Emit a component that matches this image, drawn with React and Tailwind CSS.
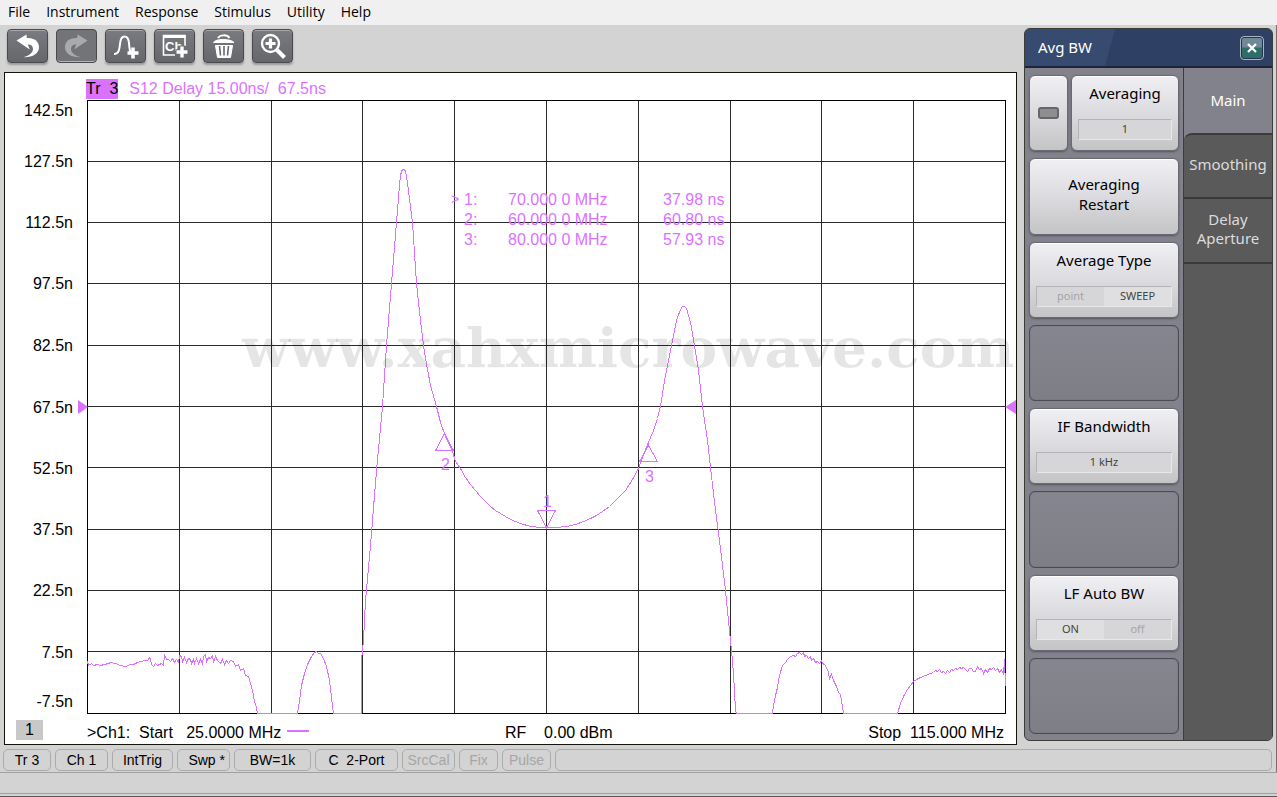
import clsx from "clsx";

const MENUS = ["File", "Instrument", "Response", "Stimulus", "Utility", "Help"];

const STATUS = [
    { label: "Tr 3", width: "w-12" },
    { label: "Ch 1", width: "w-[53px]" },
    { label: "IntTrig", width: "w-[61px]" },
    { label: "Swp *", width: "w-[53px]", align: "text-right pr-1" },
    { label: "BW=1k", width: "w-[77px]" },
    { label: "C  2-Port", width: "w-[83px]" },
    { label: "SrcCal", width: "w-[53px]", off: true },
    { label: "Fix", width: "w-[39px]", off: true },
    { label: "Pulse", width: "w-[49px]", off: true },
];

const COLS = [87, 179, 271, 362, 454, 546, 638, 730, 821, 913, 1005];
const ROWS = [100, 161, 222, 283, 345, 406, 467, 529, 590, 651, 713];

const AXIS = [
    ["142.5n", 116],
    ["127.5n", 167],
    ["112.5n", 228],
    ["97.5n", 289],
    ["82.5n", 351],
    ["67.5n", 413],
    ["52.5n", 474],
    ["37.5n", 535],
    ["22.5n", 596],
    ["7.5n", 658],
    ["-7.5n", 707],
];

const READOUT = [
    ["1:", "70.000 0 MHz", "37.98 ns", 205],
    ["2:", "60.000 0 MHz", "60.80 ns", 225],
    ["3:", "80.000 0 MHz", "57.93 ns", 245],
];

const TRACE = [
    // left stop band
    "87,661 88,665 91,663 93,665 97,664 100,665 104,664 108,663 110,662 115,663 120,665 125,666 130,664 133,664 137,662 140,661 145,660 147,660",
    "149,657 150,659 151,664 153,666 155,663 157,665 159,664 161,663 163,665 164,654 166,659 168,659 170,661 172,658 174,662 176,659 178,662 179,655",
    "181,656 182,661 184,657 186,662 188,658 190,659 191,663 193,659 194,663 196,658 198,663 200,659 202,663 203,656 205,654 206,661 208,657 210,658",
    "212,655 213,662 215,656 217,660 220,663 222,659 224,664 226,660 228,663 230,660 233,661 235,666 238,664 240,670 243,668 245,675 248,676 250,683",
    "252,690 254,701 256,707 257,713 297,713 299,700 301,685 304,673 307,664 311,656 314,652 316,651 318,653 320,653 323,658 326,666 329,680 331,697 333,713",
    // pass band
    "361,713 361,660 363,640 365,600 370,545 376,470 382,406 386,345 391,283 396,222 399,185 400,175 401,171 402,169 404,169 405,171 406,176 408,190 411,215 412,222 416,283",
    "420,320 423,345 425,358 430,385 436,406 440,422 445,436 452,451 455,461 460,468 465,477 470,484 475,490 480,496 485,501 490,506 495,510 500,513",
    "505,516 510,519 515,521 520,523 530,526 540,527 556,527 566,526 575,524 583,521 590,518 596,515 602,511 609,506 615,500 620,495 625,490 632,479",
    "638,468 645,449 653,430 657,418 660,406 664,380 667,365 671,345 676,320 680,309 682,306 684,306 686,308 690,322 694,345 698,370 702,406 707,440",
    "710,467 715,510 719,540 725,590 730,640 732,660 734,690 735,710 736,713",
    // right stop band
    "772,713 773,705 775,695 777,687 779,675 782,665 785,662 787,659 790,656 793,655 795,656 797,653 799,652 801,654 803,652 804,656 806,655 808,658",
    "810,656 811,660 813,658 815,662 817,661 819,663 821,660 822,663 824,664 826,667 828,672 829,678 831,674 833,680 836,686 838,692 840,694 842,706 843,713",
    "897,713 900,703 903,696 907,689 913,681 916,679 920,677 925,675 930,673 933,672 935,670 937,671 939,669 941,672 943,671 945,673 947,670 949,672",
    "951,669 953,670 955,668 957,669 959,667 961,668 963,667 965,669 967,671 969,668 971,668 973,671 975,671 977,666 979,669 981,668 983,673 985,669",
    "987,672 989,668 991,669 993,667 995,670 997,668 999,672 1001,669 1003,674 1004,659 1005,686",
].join(" ");

function UndoArrow() {
    return (
        <path d="M9.500 11.500 L19.500 5.500 L19.800 9 C27.500 8.500 32 12.500 32 18.300 C32 24.500 26 28.500 16.500 28.300 C22.500 26.500 26.200 23.500 26 19.800 C25.700 16.600 23.500 15.300 20.800 15.600 L22.800 20.500 Z" fill="currentColor" />
    );
}

const TOOLS = [
    { title: "Undo", icon: <UndoArrow /> },
    { title: "Redo", off: true, icon: <g transform="matrix(-1 0 0 1 41 0)"><UndoArrow /></g> },
    {
        title: "Add trace",
        icon: (
            <g fill="none" stroke="currentColor">
                <path d="M9 25 C14 25 14.500 20 15 15 C15.500 9 17 7.500 19.500 7.500 C22 7.500 23.500 9 24 14 C24.300 18 24.500 21 25.500 23" strokeWidth="2" />
                <path d="M28 18.500 V29.500 M22.500 24 H33.500" strokeWidth="3.600" />
            </g>
        ),
    },
    {
        title: "Add channel",
        icon: (
            <g fill="none" stroke="currentColor">
                <path d="M31 17 V6.500 H9.500 V26 H21" strokeWidth="1.600" />
                <path d="M9 7.500 H31.500" strokeWidth="3" />
                <text x="11" y="22" fontSize="13" fontWeight="700" fill="currentColor" stroke="none" className="font-['Liberation_Sans']">Ch</text>
                <path d="M28 16.500 V29.500 M21.500 23 H34.500" stroke="#6c6d72" strokeWidth="5.600" />
                <path d="M28 17.500 V28.500 M22.500 23 H33.500" strokeWidth="3.400" />
            </g>
        ),
    },
    {
        title: "Delete",
        icon: (
            <g fill="none" stroke="currentColor">
                <path d="M15 9 C16.500 6 24 5 26.500 9" strokeWidth="2" />
                <path d="M10.500 13.500 C12 9.500 28 9.500 31 13.500 Z" fill="currentColor" strokeWidth="1" />
                <path d="M12.500 16.500 H29.500 L27.500 28.500 H14.500 Z" fill="currentColor" strokeWidth="1" />
                <path d="M16.500 17 L17.500 26.500 M21 17 V26.500 M25.500 17 L24.500 26.500" stroke="#66676b" strokeWidth="1.600" />
            </g>
        ),
    },
    {
        title: "Zoom",
        icon: (
            <g fill="none" stroke="currentColor">
                <circle cx="18.500" cy="14.500" r="8.500" strokeWidth="2.400" />
                <path d="M18.500 9.500 V19.500 M13.500 14.500 H23.500" strokeWidth="3.200" />
                <path d="M25 21 L32.500 28.500" strokeWidth="4" />
            </g>
        ),
    },
];

function ToolButton({ tool }) {
    return (
        <button
            type="button"
            title={tool.title}
            aria-label={tool.title}
            disabled={tool.off}
            className={clsx(
                "h-[34px] w-[41px] overflow-hidden rounded-sm border",
                tool.off
                    ? "border-[#4a4a4d] bg-[#737478] text-[#a9aaad] shadow-[inset_0_-1px_0_#b5b5b8]"
                    : "border-[#4a4a4d] bg-linear-to-b from-[#7a7b80] to-[#66676b] text-white shadow-[inset_0_1px_0_#a8a8ac,0_2px_2px_#9a9a9a]"
            )}
        >
            <svg viewBox="1 1 39 32" className="block size-full">{tool.icon}</svg>
        </button>
    );
}

function Plot() {
    return (
        <svg viewBox="5 98 1011 620" className="relative block h-auto w-full overflow-visible text-base" role="img" aria-label="S12 group delay trace">
            <g stroke="#2b2b2b" shapeRendering="crispEdges">
                {COLS.map((x) => (
                    <line key={x} x1={x + 0.5} x2={x + 0.5} y1="100" y2="714" />
                ))}
                {ROWS.map((y) => (
                    <line key={y} y1={y + 0.5} y2={y + 0.5} x1="87" x2="1006" />
                ))}
                <rect x="87.5" y="100.5" width="918" height="613" fill="none" stroke="#000" />
            </g>

            <g textAnchor="end" fill="#000">
                {AXIS.map(([label, y]) => (
                    <text key={label} x="73" y={y}>{label}</text>
                ))}
            </g>

            {/* Reference level */}
            <path d="M78 400 L88 407 L78 414 Z M1016 400 L1005 407 L1016 414 Z" fill="#da72ff" />

            <polyline points={TRACE} transform="translate(0.5 0.5)" fill="none" stroke="#da72ff" shapeRendering="crispEdges" />

            {/* Markers */}
            <g fill="none" stroke="#da72ff" shapeRendering="crispEdges">
                <path d="M444.500 433.500 L435.500 450.500 H453.500 Z" />
                <path d="M648.500 445.500 L639.500 461.500 H657.500 Z" />
                <path d="M546.500 527.500 L537.500 510.500 H555.500 Z" />
            </g>
            <g fill="#da72ff">
                <text x="441" y="470">2</text>
                <text x="645" y="482">3</text>
                <text x="543" y="507">1</text>
                <text x="451" y="204" fontSize="14">&gt;</text>
                {READOUT.map(([n, freq, value, y]) => (
                    <g key={n}>
                        <text x="464" y={y}>{n}</text>
                        <text x="508" y={y}>{freq}</text>
                        <text x="663" y={y}>{value}</text>
                    </g>
                ))}
            </g>

            <text x="242" y="367" fontSize="55" fontWeight="700" fillOpacity="0.1" className="font-['DejaVu_Serif',serif]">
                www.xahxmicrowave.com
            </text>
        </svg>
    );
}

function Slot({ children }) {
    return <div className="flex gap-[3px] px-1 pt-[3px] pb-1">{children}</div>;
}

function SoftKey({ title, children, center }) {
    return (
        <button
            type="button"
            className={clsx(
                "flex min-w-0 flex-1 flex-col items-center rounded-md border border-[#6a6a72] bg-linear-to-b from-[#efeff4] via-[#dcdce0] to-[#c4c4c6] px-[6px] text-[15px] leading-5 text-black shadow-[inset_0_1px_0_#ffffff,0_1px_2px_#55555c]",
                center ? "justify-center pb-1" : "pt-[7px]"
            )}
        >
            <span>{title}</span>
            {children}
        </button>
    );
}

function Field({ children }) {
    return (
        <span className="mt-4 flex h-[21px] w-full border border-[#b4b4b8] border-r-[#e8e8ea] border-b-[#e8e8ea] bg-[#d6d6d8] text-[11px] leading-[18px] text-[#44443c]">
            {children}
        </span>
    );
}

function Choice({ label, on }) {
    return <span className={clsx("flex-1", on ? "bg-[#dfdfe1]" : "text-[#a4a4a8]")}>{label}</span>;
}

function EmptyKey() {
    return <div className="flex-1 rounded-md border border-[#4b4b53] bg-linear-to-b from-[#868690] to-[#7e7e87] shadow-[inset_0_0_1px_#4b4b53]" />;
}

function SidePanel() {
    return (
        <aside className="mt-[3px] mr-[3px] mb-1 flex w-[249px] shrink-0 flex-col overflow-hidden rounded-md border border-[#3c3d36] bg-[#5a5a5a] font-['Noto_Sans',sans-serif] text-[15px]">
            <header className="flex h-[39px] items-center justify-between border-b-2 border-[#1c2436] bg-linear-105 from-[#374a70] from-35% to-[#2f4065] to-35% pr-2 pl-[13px] text-white">
                <h2>Avg BW</h2>
                <button
                    type="button"
                    aria-label="Close"
                    className="flex size-6 items-center justify-center rounded-sm border border-[#a9b3c4] bg-linear-to-b from-[#6f8a96] from-45% to-[#2f6e68] to-50% shadow-[inset_0_0_0_1px_#24334f]"
                >
                    <svg viewBox="0 0 10 10" className="size-[10px]">
                        <path d="M1 1 L9 9 M9 1 L1 9" stroke="#fff" strokeWidth="2.200" />
                    </svg>
                </button>
            </header>
            <div className="flex flex-1">
                <div className="grid flex-1 grid-rows-8 border-r border-[#3c3d36] bg-[#82828c] pt-1 pb-[2px]">
                    <Slot>
                        <button
                            type="button"
                            aria-label="Averaging on or off"
                            className="flex w-[39px] items-center justify-center rounded-md border border-[#6a6a72] bg-linear-to-b from-[#efeff4] via-[#dcdce0] to-[#c4c4c6] shadow-[inset_0_1px_0_#ffffff,0_1px_2px_#55555c]"
                        >
                            <span className="h-3 w-[21px] rounded-[3px] border-2 border-[#66666a] bg-[#8e8e8e]" />
                        </button>
                        <SoftKey title="Averaging"><Field><span className="flex-1">1</span></Field></SoftKey>
                    </Slot>
                    <Slot><SoftKey title={<>Averaging<br />Restart</>} center /></Slot>
                    <Slot>
                        <SoftKey title="Average Type">
                            <Field><Choice label="point" /><Choice label="SWEEP" on /></Field>
                        </SoftKey>
                    </Slot>
                    <Slot><EmptyKey /></Slot>
                    <Slot>
                        <SoftKey title="IF Bandwidth"><Field><span className="flex-1">1 kHz</span></Field></SoftKey>
                    </Slot>
                    <Slot><EmptyKey /></Slot>
                    <Slot>
                        <SoftKey title="LF Auto BW">
                            <Field><Choice label="ON" on /><Choice label="off" /></Field>
                        </SoftKey>
                    </Slot>
                    <Slot><EmptyKey /></Slot>
                </div>
                <nav className="flex w-[88px] flex-col bg-[#82828c] leading-[19px] text-[#dcdcdc]">
                    <button type="button" className="h-[65px] text-white">Main</button>
                    <div className="flex flex-1 flex-col rounded-tl-lg border-t-2 border-[#3c3d36] bg-[#5a5a5a]">
                        <button type="button" className="h-16 border-b-2 border-[#3a3a3a] pb-1">Smoothing</button>
                        <button type="button" className="h-[65px] border-b-2 border-[#3a3a3a] pb-1">Delay<br />Aperture</button>
                    </div>
                </nav>
            </div>
        </aside>
    );
}

export default function App() {
    return (
        <div className="flex min-h-screen flex-col bg-[#d3d3d3] font-['Liberation_Sans',sans-serif] text-black">
            <nav className="flex h-[25px] items-center gap-4 bg-[#f0f0f0] px-2 pb-px font-['Open_Sans',sans-serif] text-sm">
                {MENUS.map((menu) => (
                    <button key={menu} type="button">{menu}</button>
                ))}
            </nav>

            <main className="flex flex-1 gap-[7px] border-r border-[#707070] pl-1">
                <div className="flex min-w-0 flex-1 flex-col">
                    <div className="flex h-[47px] items-start gap-2 pt-1 pl-[3px]">
                        {TOOLS.map((tool) => (
                            <ToolButton key={tool.title} tool={tool} />
                        ))}
                    </div>

                    <section className="flex-1 border border-[#14140a] bg-white">
                        <div className="flex h-[25px] items-center gap-[11px] pt-[6px] pl-[81px] leading-5 whitespace-pre text-[#da72ff]">
                            <span className="bg-[#da72ff] text-black">Tr  3</span>
                            <span>S12 Delay 15.00ns/  67.5ns</span>
                        </div>
                        <Plot />
                        <footer className="grid h-[26px] grid-cols-[500fr_511fr] items-center leading-5 whitespace-pre">
                            <div className="flex items-center">
                                <span className="ml-[11px] w-[27px] self-start bg-[#c8c8c8] text-center">1</span>
                                <span className="ml-11 pt-[3px]">&gt;Ch1:  Start   25.0000 MHz</span>
                                <span className="ml-[6px] h-[2px] w-[22px] bg-[#da72ff]" />
                            </div>
                            <div className="flex justify-between pt-[3px] pr-3">
                                <span>RF    0.00 dBm</span>
                                <span>Stop  115.000 MHz</span>
                            </div>
                        </footer>
                    </section>
                </div>
                <SidePanel />
            </main>

            <div className="flex gap-1 border-r border-[#707070] pt-1 pr-1 pb-px pl-[3px] text-sm leading-5 whitespace-pre">
                {STATUS.map((item) => (
                    <span
                        key={item.label}
                        className={clsx(
                            "rounded-[5px] border border-[#ababab]",
                            item.width,
                            item.align || "text-center",
                            item.off && "text-[#a6a6a6]"
                        )}
                    >
                        {item.label}
                    </span>
                ))}
                <span className="flex-1 rounded-[5px] border border-[#ababab]" />
            </div>
            <div className="border-t border-b border-t-[#a0a0a0] border-b-[#5a5a5a] pb-[2px]">
                <div className="h-[21px] border-b border-[#a0a0a0]" />
            </div>
        </div>
    );
}
